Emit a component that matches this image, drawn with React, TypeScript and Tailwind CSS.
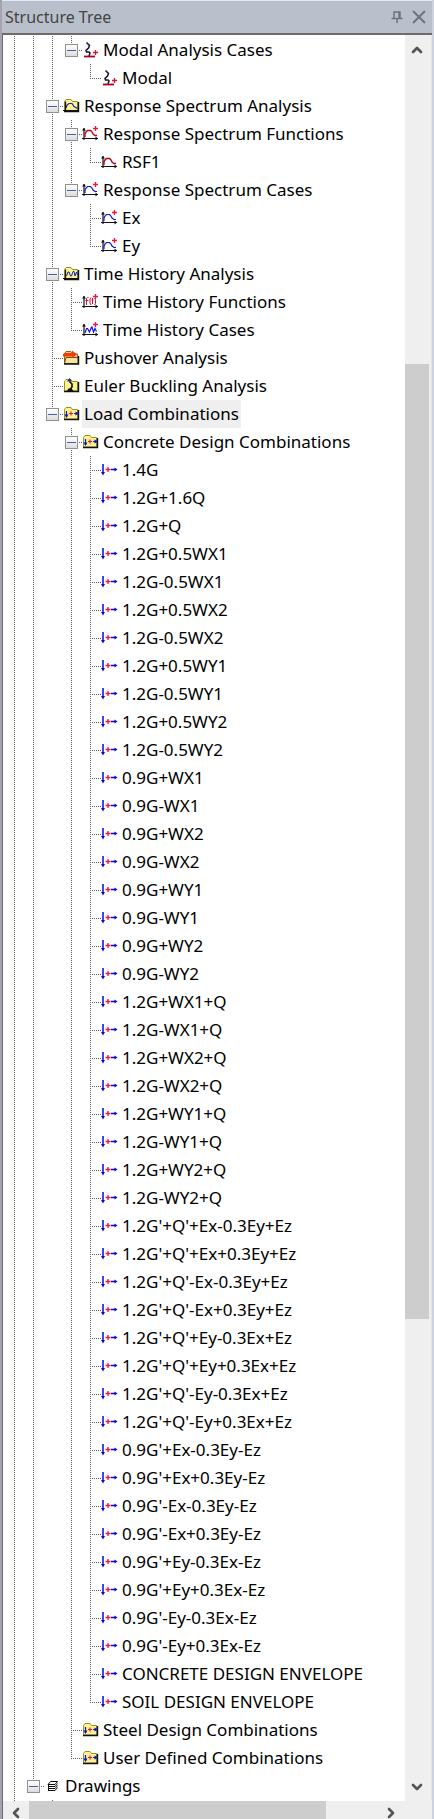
import { ChevronDown, ChevronLeft, ChevronRight, ChevronUp } from 'lucide-react';

type IconName =
  | 'modal'
  | 'spectrumFolder'
  | 'spectrumFunctions'
  | 'spectrumFunction'
  | 'spectrumCase'
  | 'historyFolder'
  | 'historyFunctions'
  | 'historyCases'
  | 'pushover'
  | 'buckling'
  | 'comboFolder'
  | 'combo'
  | 'drawings';

interface TreeNode {
  label: string;
  icon: IconName;
  depth: number;
  expanded?: boolean;
  selected?: boolean;
}

const combinations = [
  '1.4G',
  '1.2G+1.6Q',
  '1.2G+Q',
  '1.2G+0.5WX1',
  '1.2G-0.5WX1',
  '1.2G+0.5WX2',
  '1.2G-0.5WX2',
  '1.2G+0.5WY1',
  '1.2G-0.5WY1',
  '1.2G+0.5WY2',
  '1.2G-0.5WY2',
  '0.9G+WX1',
  '0.9G-WX1',
  '0.9G+WX2',
  '0.9G-WX2',
  '0.9G+WY1',
  '0.9G-WY1',
  '0.9G+WY2',
  '0.9G-WY2',
  '1.2G+WX1+Q',
  '1.2G-WX1+Q',
  '1.2G+WX2+Q',
  '1.2G-WX2+Q',
  '1.2G+WY1+Q',
  '1.2G-WY1+Q',
  '1.2G+WY2+Q',
  '1.2G-WY2+Q',
  "1.2G'+Q'+Ex-0.3Ey+Ez",
  "1.2G'+Q'+Ex+0.3Ey+Ez",
  "1.2G'+Q'-Ex-0.3Ey+Ez",
  "1.2G'+Q'-Ex+0.3Ey+Ez",
  "1.2G'+Q'+Ey-0.3Ex+Ez",
  "1.2G'+Q'+Ey+0.3Ex+Ez",
  "1.2G'+Q'-Ey-0.3Ex+Ez",
  "1.2G'+Q'-Ey+0.3Ex+Ez",
  "0.9G'+Ex-0.3Ey-Ez",
  "0.9G'+Ex+0.3Ey-Ez",
  "0.9G'-Ex-0.3Ey-Ez",
  "0.9G'-Ex+0.3Ey-Ez",
  "0.9G'+Ey-0.3Ex-Ez",
  "0.9G'+Ey+0.3Ex-Ez",
  "0.9G'-Ey-0.3Ex-Ez",
  "0.9G'-Ey+0.3Ex-Ez",
  'CONCRETE DESIGN ENVELOPE',
  'SOIL DESIGN ENVELOPE',
];

const nodes: TreeNode[] = [
  { label: 'Modal Analysis Cases', icon: 'modal', depth: 3, expanded: true },
  { label: 'Modal', icon: 'modal', depth: 4 },
  { label: 'Response Spectrum Analysis', icon: 'spectrumFolder', depth: 2, expanded: true },
  { label: 'Response Spectrum Functions', icon: 'spectrumFunctions', depth: 3, expanded: true },
  { label: 'RSF1', icon: 'spectrumFunction', depth: 4 },
  { label: 'Response Spectrum Cases', icon: 'spectrumCase', depth: 3, expanded: true },
  { label: 'Ex', icon: 'spectrumCase', depth: 4 },
  { label: 'Ey', icon: 'spectrumCase', depth: 4 },
  { label: 'Time History Analysis', icon: 'historyFolder', depth: 2, expanded: true },
  { label: 'Time History Functions', icon: 'historyFunctions', depth: 3 },
  { label: 'Time History Cases', icon: 'historyCases', depth: 3 },
  { label: 'Pushover Analysis', icon: 'pushover', depth: 2 },
  { label: 'Euler Buckling Analysis', icon: 'buckling', depth: 2 },
  { label: 'Load Combinations', icon: 'comboFolder', depth: 2, expanded: true, selected: true },
  { label: 'Concrete Design Combinations', icon: 'comboFolder', depth: 3, expanded: true },
  ...combinations.map((label): TreeNode => ({ label, icon: 'combo', depth: 4 })),
  { label: 'Steel Design Combinations', icon: 'comboFolder', depth: 3 },
  { label: 'User Defined Combinations', icon: 'comboFolder', depth: 3 },
  { label: 'Drawings', icon: 'drawings', depth: 1, expanded: true },
];

// A guide continues below a row when another node follows at that depth
// before the list climbs back above it.
function continuesBelow(index: number, depth: number) {
  if (depth === 0) return true;
  for (let i = index + 1; i < nodes.length; i++) {
    if (nodes[i].depth === depth) return true;
    if (nodes[i].depth < depth) return false;
  }
  return false;
}

function Folder() {
  return (
    <>
      <path d="M1.500 13V3.500L3 1.500h5L9.500 3.500H14.500V13z" fill="#fbf291" stroke="#98921a" />
      <path d="M1 13.500H15.500V4" fill="none" stroke="#111" strokeWidth="1.400" />
    </>
  );
}

function Axes() {
  return (
    <>
      <path d="M2 2v12M0 12.500h16" fill="none" stroke="#111" strokeWidth="1.200" />
      <path d="M0 4.500L2 2l2 2.500zM13.500 10.500l2.500 2-2.500 2z" fill="#111" />
    </>
  );
}

function Plus() {
  return <path d="M13.500 0v5M11 2.500h5" stroke="#f0143c" strokeWidth="1.300" />;
}

function NodeIcon({ name }: { name: IconName }) {
  const spectrum = 'M3 11V8l1-2 1.500-1.500h3L10 6l1 2 2 1.500h2';
  switch (name) {
    case 'modal':
      return (
        <>
          <path
            d="M4.500 0.500L6 2l1.500 1.500L6.500 6 4 8.500l.5 1.500H7l1 1-1 3"
            stroke="#14142e"
            strokeWidth="1.500"
            fill="none"
          />
          <path d="M2 14.500h11" stroke="#b00020" strokeWidth="1.800" />
          <path d="M13.500 8v5M11 10.500h5" stroke="#e0102c" strokeWidth="1.300" />
        </>
      );
    case 'spectrumFolder':
      return (
        <>
          <Folder />
          <path d="M3 10l1-3 2-1.500h3l2 3 3.500 2" stroke="#1420c8" fill="none" strokeWidth="1.200" />
          <path d="M2.500 3.500v10M0 12.500h15" stroke="#111" strokeWidth="1.200" />
        </>
      );
    case 'spectrumFunctions':
      return (
        <>
          <Axes />
          <path d={spectrum} stroke="#c00818" fill="none" strokeWidth="1.400" />
          <Plus />
        </>
      );
    case 'spectrumFunction':
      return (
        <>
          <Axes />
          <path d={spectrum} stroke="#b00818" fill="none" strokeWidth="1.400" />
        </>
      );
    case 'spectrumCase':
      return (
        <>
          <Axes />
          <path d={spectrum} stroke="#1414d8" fill="none" strokeWidth="1.200" />
          <Plus />
        </>
      );
    case 'historyFolder':
      return (
        <>
          <Folder />
          <path
            d="M3.500 10L5 6h1l1.500 4h1L10 5.500h1L12 10l1.500-4 1 3"
            stroke="#1420c8"
            fill="none"
          />
          <path d="M2.500 3.500v10M0 12.500h15" stroke="#111" strokeWidth="1.200" />
        </>
      );
    case 'historyFunctions':
      return (
        <>
          <Axes />
          <path
            d="M6.500 3.500H5.500l-1 1V11M3.500 6.500h3M9 3.500L8 5v4l1 2M10.500 4v6M9.500 6h2M12.500 4l1 1.500v4l-1 1.500"
            stroke="#d81038"
            fill="none"
          />
          <Plus />
        </>
      );
    case 'historyCases':
      return (
        <>
          <Axes />
          <path
            d="M3 11l1.500-4.500h1L7.500 10 9.500 5h.5l1.500 5 1.500-3.500 1.500 3"
            stroke="#1414d8"
            fill="none"
            strokeWidth="1.200"
          />
          <Plus />
        </>
      );
    case 'pushover':
      return (
        <>
          <path d="M1.500 13V4L3 1.500h5L10 4h4.500v3" fill="#e8d860" stroke="#8a6a10" />
          <path d="M1.500 13.500L3 7.500h12v6z" fill="#f6e4a0" stroke="#6a5410" />
          <path d="M0 4l2-1h7V0.500L14 4.500 9 8V6.500H0z" fill="#ff3414" />
          <path d="M15.500 6v8H1" stroke="#111" fill="none" strokeWidth="1.400" />
        </>
      );
    case 'buckling':
      return (
        <>
          <Folder />
          <path
            d="M6.500 3.500L9 6v3l-2 2.500"
            stroke="#111"
            strokeWidth="1.600"
            fill="none"
          />
          <path d="M3.500 13.500l2-3h3l2.500 3z" fill="#111" />
          <path d="M4 3.500L6.500 0 9 3.500z" fill="#1428a0" />
        </>
      );
    case 'comboFolder':
      return (
        <>
          <Folder />
          <path d="M3.500 5v6M11 7.500h5" stroke="#0a14c8" strokeWidth="1.200" />
          <path d="M1.500 8.500h4L3.500 12zM12.500 5.500L16 7.500l-3.500 2z" fill="#0a14c8" />
          <path d="M8 5.500v4M6 7.500h4" stroke="#f0143c" strokeWidth="1.200" />
        </>
      );
    case 'combo':
      return (
        <>
          <path d="M2 2v9M10 7.500h5" stroke="#0808d8" strokeWidth="1.500" />
          <path d="M0 10h4l-2 3.500zM13.500 5.500L16.500 7.500l-3 2z" fill="#0808d8" />
          <path d="M7 5v5M4.500 7.500h5" stroke="#f0143c" strokeWidth="1.300" />
        </>
      );
    case 'drawings':
      return (
        <path
          d="M6.500 3.500h7L11 6.500H4zM13.500 5.500L11 8.500H4M13.500 7.500L11 10.500H4M13.500 9.500L11 12.500H4M4.500 6v7"
          stroke="#111"
          fill="none"
        />
      );
  }
}

function VerticalGuide({ className }: { className: string }) {
  return (
    <span
      className={`absolute left-[9px] w-px bg-[linear-gradient(#606060_50%,transparent_50%)] bg-[size:1px_2px] ${className}`}
    />
  );
}

function TreeRow({ node, index }: { node: TreeNode; index: number }) {
  const ancestors = Array.from({ length: node.depth }, (_, depth) => depth);

  return (
    <li
      role="treeitem"
      aria-level={node.depth + 1}
      aria-expanded={node.expanded}
      aria-selected={!!node.selected}
      className="flex h-7 items-center pl-[2px]"
    >
      {ancestors.map((depth) => (
        <span key={depth} className="relative h-7 w-[19px] shrink-0">
          {continuesBelow(index, depth) && <VerticalGuide className="inset-y-0" />}
        </span>
      ))}
      <span className="relative flex h-7 w-5 shrink-0 items-center pl-[3px]">
        <VerticalGuide className="top-0 h-[14px]" />
        {continuesBelow(index, node.depth) && <VerticalGuide className="top-[14px] h-[14px]" />}
        <span className="absolute left-[9px] right-0 top-[14px] h-px bg-[linear-gradient(90deg,#606060_50%,transparent_50%)] bg-[size:2px_1px]" />
        {node.expanded && (
          <button
            type="button"
            aria-label={`Collapse ${node.label}`}
            className="relative flex size-[13px] items-center justify-center border border-[#919191] bg-linear-to-b from-white to-[#dcdcdc]"
          >
            <span className="h-px w-[9px] bg-[#4660a8]" />
          </button>
        )}
      </span>
      <svg viewBox="0 0 16 16" className="size-4 shrink-0 overflow-visible" aria-hidden="true">
        <NodeIcon name={node.icon} />
      </svg>
      <span
        className={`ml-[3px] flex h-7 items-center whitespace-pre px-[2px] ${node.selected ? 'bg-[#efefef]' : ''}`}
      >
        {node.label}
      </span>
    </li>
  );
}

export default function App() {
  return (
    <div className="flex min-h-screen flex-col border-l-2 border-r-2 border-l-[#a5a3ae] border-r-[#ced2df] bg-[#efefef] font-['Noto_Sans',sans-serif] text-[17px] text-black">
      <header className="flex h-[35px] items-center justify-between border-b-2 border-t border-b-[#6c6c6c] border-t-[#e4e8f4] bg-[#bac0cb] pl-[3px] pr-[6px] text-[#444]">
        <h1 className="text-[16px]">Structure Tree</h1>
        <div className="flex items-center gap-2">
          <button type="button" aria-label="Pin panel">
            <svg viewBox="0 0 14 14" className="size-[14px]" fill="none" stroke="#707479" strokeWidth="1.500">
              <path d="M4 8V2h6v6M1.500 8.500h11M7 9v4M9 2v6" />
            </svg>
          </button>
          <button type="button" aria-label="Close panel">
            <svg viewBox="0 0 14 14" className="size-[14px]" stroke="#707479" strokeWidth="2">
              <path d="M1 1l12 12M13 1L1 13" />
            </svg>
          </button>
        </div>
      </header>

      <main className="flex min-w-0 grow border-l border-r border-l-[#6c6c6c] border-r-[#e4e4e0]">
        <div className="min-w-0 grow overflow-hidden bg-white pt-px">
          <ul role="tree" aria-label="Structure">
            {nodes.map((node, index) => (
              <TreeRow key={index} node={node} index={index} />
            ))}
          </ul>
          {/* guides running on into the nodes below the fold */}
          <div className="flex h-px pl-[2px]">
            <span className="relative w-[38px]">
              <VerticalGuide className="inset-y-0" />
            </span>
            <span className="relative w-[19px]">
              <VerticalGuide className="inset-y-0" />
            </span>
          </div>
        </div>
        <div className="flex w-[26px] shrink-0 flex-col">
          <button type="button" aria-label="Scroll up" className="flex h-[29px] w-6 items-center justify-center">
            <ChevronUp className="size-4 text-[#555]" strokeWidth={4} />
          </button>
          <div className="flex w-full grow flex-col">
            <div className="grow-[300]" />
            <div className="w-6 grow-[955] bg-[#cdcdcd]" />
            <div className="grow-[453]" />
          </div>
          <button type="button" aria-label="Scroll down" className="flex h-[29px] w-6 items-center justify-center">
            <ChevronDown className="size-4 text-[#555]" strokeWidth={4} />
          </button>
        </div>
      </main>

      <footer className="flex h-[18px] shrink-0 overflow-hidden border-l border-l-[#6c6c6c] pr-7">
        <button type="button" aria-label="Scroll left" className="flex w-[26px] shrink-0 justify-center pt-1">
          <ChevronLeft className="size-4 text-[#555]" strokeWidth={4} />
        </button>
        <div className="flex grow">
          <div className="w-[85%] bg-[#cdcdcd]" />
        </div>
        <button type="button" aria-label="Scroll right" className="flex w-[26px] shrink-0 justify-center pt-1">
          <ChevronRight className="size-4 text-[#555]" strokeWidth={4} />
        </button>
      </footer>
    </div>
  );
}
